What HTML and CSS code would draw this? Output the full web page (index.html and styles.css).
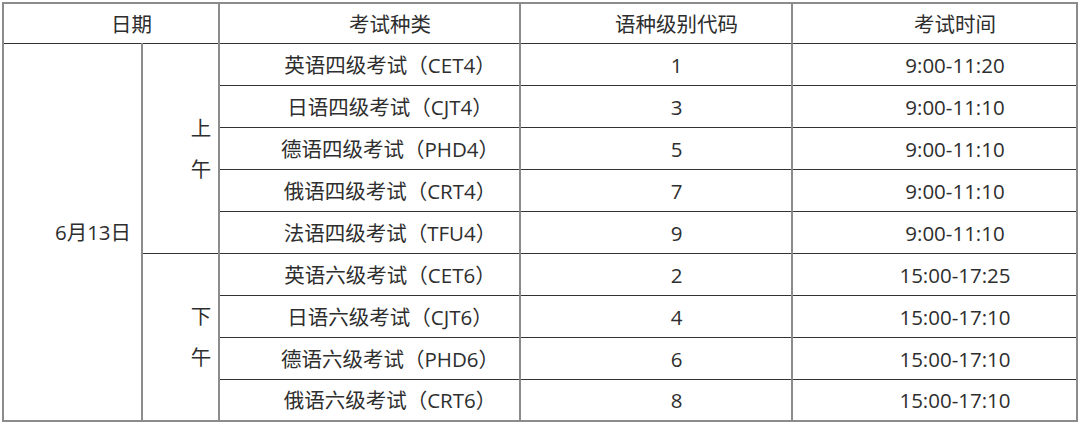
FILE: index.html
```html
<!DOCTYPE html>
<html lang="zh-CN">
<head>
<meta charset="utf-8">
<link rel="stylesheet" href="styles.css">
</head>
<body>
<table class="exam">
  <colgroup>
    <col class="c1"><col class="c2"><col class="c3"><col class="c4"><col class="c5">
  </colgroup>
  <thead>
    <tr>
      <th colspan="2">日期</th>
      <th>考试种类</th>
      <th>语种级别代码</th>
      <th>考试时间</th>
    </tr>
  </thead>
  <tbody>
    <tr>
      <td rowspan="9">6月13日</td>
      <td rowspan="5" class="half">上<br>午</td>
      <td>英语四级考试（CET4）</td><td>1</td><td>9:00-11:20</td>
    </tr>
    <tr><td>日语四级考试（CJT4）</td><td>3</td><td>9:00-11:10</td></tr>
    <tr><td>德语四级考试（PHD4）</td><td>5</td><td>9:00-11:10</td></tr>
    <tr><td>俄语四级考试（CRT4）</td><td>7</td><td>9:00-11:10</td></tr>
    <tr><td>法语四级考试（TFU4）</td><td>9</td><td>9:00-11:10</td></tr>
    <tr>
      <td rowspan="4" class="half">下<br>午</td>
      <td>英语六级考试（CET6）</td><td>2</td><td>15:00-17:25</td>
    </tr>
    <tr><td>日语六级考试（CJT6）</td><td>4</td><td>15:00-17:10</td></tr>
    <tr><td>德语六级考试（PHD6）</td><td>6</td><td>15:00-17:10</td></tr>
    <tr class="last"><td>俄语六级考试（CRT6）</td><td>8</td><td>15:00-17:10</td></tr>
  </tbody>
</table>
</body>
</html>
```
FILE: styles.css
```css
html, body {
  margin: 0;
  padding: 0;
  background: #fff;
}
body {
  padding: 2px;
  font-family: "Open Sans", "Noto Sans CJK SC", sans-serif;
  color: #2e2e2e;
  font-size: 20.5px;
}
.exam {
  border-collapse: collapse;
  table-layout: fixed;
  width: 1076px;
  border: 2px solid #8c8c8c;
}
.c1 { width: 139px; }
.c2 { width: 77px; }
.c3 { width: 301px; }
.c4 { width: 272px; }
.c5 { width: 285px; }
.exam th, .exam td {
  font-weight: normal;
  text-align: center;
  vertical-align: middle;
  padding: 0 0 0 41px;
  height: 41px;
  line-height: 24px;
  border-top: 1px solid #333;
  border-bottom: 1px solid #333;
  border-left: 2px solid #8c8c8c;
  border-right: 2px solid #8c8c8c;
  white-space: nowrap;
}
.exam thead th {
  height: 39px;
}
.exam .last td {
  height: 40px;
}
.exam .half {
  line-height: 41px;
}
```
